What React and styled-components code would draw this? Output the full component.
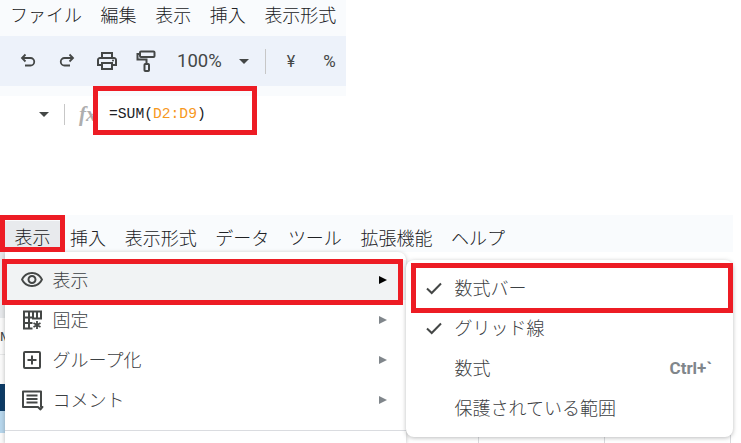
import React from "react";
import styled, { createGlobalStyle } from "styled-components";

const RED = "#ed1c24";
const JP = `"Noto Sans CJK JP", "Noto Sans", sans-serif`;

const GlobalStyle = createGlobalStyle`
  html, body {
    margin: 0;
    padding: 0;
    background: #fff;
    overflow: hidden;
  }
  body {
    font-family: ${JP};
  }
`;

const Page = styled.div`
  width: 741px;
  height: 443px;
  display: flex;
  flex-direction: column;
  overflow: hidden;
`;

// top crop
const TopCrop = styled.section`
  width: 346px;
  height: 215px;
  flex-shrink: 0;
`;
const MenuBar = styled.div`
  display: flex;
  gap: 18.6px;
  align-items: center;
  height: ${(p) => p.$height}px;
  padding: ${(p) => p.$padTop}px 0 ${(p) => p.$padBottom}px ${(p) => p.$left}px;
  background: #f9fbfd;
  overflow: hidden;
  box-sizing: border-box;
`;
const MenuLabel = styled.span`
  font-size: 18px;
  font-weight: 300;
  line-height: 1;
  color: #202124;
  white-space: nowrap;
`;
const Toolbar = styled.div`
  height: 50px;
  background: #edf2fa;
  display: flex;
  align-items: center;
  color: #444746;
  padding-left: 20px;
  box-sizing: border-box;
`;
const ToolIcon = styled.svg`
  display: block;
  flex-shrink: 0;
  margin-right: ${(p) => p.$gap}px;
`;
const Zoom = styled.span`
  font-family: Roboto, sans-serif;
  font-size: 18.5px;
  color: #444746;
  margin: 0 17px 0 0;
`;
const DownCaret = styled.i`
  display: block;
  width: 0;
  height: 0;
  border-left: 5px solid transparent;
  border-right: 5px solid transparent;
  border-top: 5px solid ${(p) => p.$color || "#444746"};
  flex-shrink: 0;
`;
const ToolDivider = styled.i`
  display: block;
  width: 1px;
  height: 25px;
  background: #c7c7c7;
  margin: 0 ${(p) => p.$right}px 0 ${(p) => p.$left}px;
`;
const ToolText = styled.span`
  font-family: Roboto, sans-serif;
  font-size: ${(p) => p.$size}px;
  color: #444746;
  margin-right: ${(p) => p.$right || 0}px;
`;
const FormulaStrip = styled.div`
  height: 10px;
  background: #f9fbfd;
`;
const FormulaRow = styled.div`
  height: 39px;
  display: flex;
  align-items: center;
  padding: 0 0 3px 39px;
  box-sizing: border-box;
  position: relative;
`;
const FormulaDivider = styled.i`
  display: block;
  width: 1px;
  height: 21px;
  background: #c7c7c7;
  margin: 0 14px 0 15px;
`;
const FxMark = styled.span`
  font-family: "Liberation Serif", serif;
  font-style: italic;
  font-weight: 700;
  font-size: 21px;
  line-height: 1;
  color: #aeaeae;
  width: 30px;
  flex-shrink: 0;
`;
const FormulaText = styled.span`
  font-family: "Liberation Mono", monospace;
  font-size: 14.67px;
  color: #202124;
`;
const Range = styled.span`
  color: #f7981d;
`;
const RedFrame = styled.span`
  position: absolute;
  left: ${(p) => p.$left}px;
  top: ${(p) => p.$top}px;
  width: ${(p) => p.$width}px;
  height: ${(p) => p.$height}px;
  border: 5px solid ${RED};
  box-sizing: border-box;
  pointer-events: none;
  z-index: 5;
`;

// bottom crop
const BottomCrop = styled.section`
  position: relative;
  flex: 1;
  width: 733px;
`;
const ActiveMenu = styled.span`
  background: #e8eaed;
  margin-left: -10px;
  margin-right: -9px;
  padding: 0 10px 2px;
  align-self: stretch;
  display: flex;
  align-items: center;
`;
const SheetEdge = styled.div`
  position: absolute;
  left: 0;
  top: 37px;
  width: 5px;
  height: 191px;
  background: linear-gradient(
    to bottom,
    #e6e8eb 0,
    #e6e8eb 66px,
    #fafafa 66px,
    #fafafa 102px,
    #d4d6d8 102px,
    #fafafa 103px,
    #fafafa 132px,
    #0b3a66 132px,
    #0b3a66 159px,
    #b6d6ec 159px,
    #b6d6ec 181px,
    #fafafa 181px
  );
`;
const EdgeLetter = styled.span`
  display: block;
  padding-top: 78px;
  font-family: Roboto, sans-serif;
  font-size: 13px;
  line-height: 1;
  color: #444746;
`;
const Dropdown = styled.div`
  position: absolute;
  left: ${(p) => p.$left}px;
  top: ${(p) => p.$top}px;
  width: ${(p) => p.$width}px;
  height: ${(p) => p.$height}px;
  background: #fff;
  border-radius: ${(p) => p.$radius};
  box-shadow: 0 1px 4px rgba(60, 64, 67, 0.35);
  box-sizing: border-box;
  padding-top: ${(p) => p.$padTop}px;
  z-index: ${(p) => p.$z};
`;
const Row = styled.div`
  height: 40px;
  display: flex;
  align-items: center;
  position: relative;
  padding: 0 ${(p) => p.$right}px 0 ${(p) => p.$left}px;
  background: ${(p) => (p.$hover ? "#f1f3f4" : "transparent")};
  box-sizing: border-box;
  font-size: 18px;
  font-weight: 300;
  color: #3c4043;
`;
const RowIcon = styled.svg`
  width: 24px;
  height: 24px;
  display: block;
  flex-shrink: 0;
  margin-right: 8.6px;
  color: #444746;
`;
const RowLabel = styled.span`
  flex: 1;
  white-space: nowrap;
  line-height: 1;
  padding-bottom: 2px;
`;
const SubArrow = styled.i`
  display: block;
  width: 0;
  height: 0;
  border-top: 4px solid transparent;
  border-bottom: 4px solid transparent;
  border-left: 8px solid ${(p) => (p.$active ? "#000" : "#80868b")};
`;
const Separator = styled.div`
  height: 1px;
  background: #dadce0;
  margin-top: 10px;
`;
const Check = styled.svg`
  width: 18px;
  height: 18px;
  display: block;
  flex-shrink: 0;
  margin-right: 11.6px;
  color: #444746;
`;
const Blank = styled.span`
  width: 18px;
  flex-shrink: 0;
  margin-right: 11.6px;
`;
const Shortcut = styled.span`
  font-family: Roboto, sans-serif;
  font-weight: 700;
  font-size: 17px;
  color: #80868b;
`;
const GridLines = styled.div`
  position: absolute;
  left: 370px;
  bottom: 0;
  width: 363px;
  height: 13px;
  border-top: 1px solid #e1e3e6;
  background: linear-gradient(#d8dadd, #d8dadd) 108px 0 / 1px 100% no-repeat,
    linear-gradient(#d8dadd, #d8dadd) 234px 0 / 1px 100% no-repeat,
    linear-gradient(#d8dadd, #d8dadd) 360px 0 / 1px 100% no-repeat;
`;

const stroke = { fill: "none", stroke: "currentColor", strokeWidth: 2 };

const UndoIcon = () => (
  <ToolIcon $gap={23} width="16" height="16" viewBox="0 0 16 16" {...stroke} strokeWidth="1.8">
    <path d="M5.500 1.500 2 5l3.500 3.500M2 5h8.500a3.700 3.700 0 0 1 0 7.500H5" />
  </ToolIcon>
);
const RedoIcon = () => (
  <ToolIcon $gap={20} width="16" height="16" viewBox="0 0 16 16" {...stroke} strokeWidth="1.8">
    <path d="M10.500 1.500 14 5l-3.500 3.500M14 5H5.500a3.700 3.700 0 0 0 0 7.500H11" />
  </ToolIcon>
);
const PrintIcon = () => (
  <ToolIcon $gap={17} width="24" height="24" viewBox="0 0 24 24" fill="currentColor">
    <path d="M19 8h-1V3H6v5H5c-1.660 0-3 1.340-3 3v6h4v4h12v-4h4v-6c0-1.660-1.340-3-3-3zM8 5h8v3H8V5zm8 12v2H8v-4h8v2zm2-2v-2H6v2H4v-4c0-.550.450-1 1-1h14c.550 0 1 .450 1 1v4h-2z" />
    <circle cx="18" cy="11.500" r="1" />
  </ToolIcon>
);
const PaintIcon = () => (
  <ToolIcon $gap={21} width="20" height="22" viewBox="0 0 20 22" {...stroke}>
    <rect x="4" y="1.500" width="14.500" height="5.500" rx="1" />
    <path d="M4 4H1.500v5.500h9V14" />
    <rect x="8.500" y="14" width="4.500" height="7" rx=".8" />
  </ToolIcon>
);
const EyeIcon = () => (
  <RowIcon viewBox="0 0 24 24" fill="currentColor">
    <path d="M12 6c3.790 0 7.170 2.130 8.820 5.500C19.170 14.870 15.790 17 12 17s-7.170-2.130-8.820-5.500C4.830 8.130 8.210 6 12 6m0-2C7 4 2.730 7.110 1 11.500 2.730 15.890 7 19 12 19s9.270-3.110 11-7.500C21.270 7.110 17 4 12 4zm0 5c1.380 0 2.500 1.120 2.500 2.500S13.380 14 12 14s-2.500-1.120-2.500-2.500S10.620 9 12 9m0-2c-2.480 0-4.500 2.020-4.500 4.500S9.520 16 12 16s4.500-2.020 4.500-4.500S14.480 7 12 7z" />
  </RowIcon>
);
const FreezeIcon = () => (
  <RowIcon viewBox="0 0 24 24" fill="none" stroke="currentColor" strokeWidth="2">
    <path d="M12.500 3.500H4v17h8.500M3.500 9.500h9M3.500 15h9M9 3.500v17M13 3.500h8v7h-8zM17 3.500v7" />
    <path d="M17 13v8M13.500 15l7 4M20.500 15l-7 4" strokeWidth="1.800" />
  </RowIcon>
);
const GroupIcon = () => (
  <RowIcon viewBox="0 0 24 24" fill="none" stroke="currentColor" strokeWidth="2">
    <rect x="4" y="4" width="16" height="16" rx="1" />
    <path d="M12 7.500v9M7.500 12h9" />
  </RowIcon>
);
const CommentIcon = () => (
  <RowIcon viewBox="0 0 24 24" fill="none" stroke="currentColor" strokeWidth="2">
    <path d="M3 3.500h18v15.500h1.500L20.500 21.500 18 19H3z" strokeLinejoin="round" />
    <path d="M6.500 7.500h11M6.500 11h11M6.500 14.500h11" />
  </RowIcon>
);
const CheckIcon = () => (
  <Check viewBox="0 0 18 18" fill="none" stroke="currentColor" strokeWidth="2">
    <path d="M2 9.500 6.700 14 16 4.500" />
  </Check>
);

export default function App() {
  return (
    <Page>
      <GlobalStyle />
      <TopCrop>
        <MenuBar $height={36} $left={10} $padTop={0} $padBottom={9}>
          {["ファイル", "編集", "表示", "挿入", "表示形式"].map((m) => (
            <MenuLabel key={m}>{m}</MenuLabel>
          ))}
        </MenuBar>
        <Toolbar>
          <UndoIcon />
          <RedoIcon />
          <PrintIcon />
          <PaintIcon />
          <Zoom>100%</Zoom>
          <DownCaret />
          <ToolDivider $left={16} $right={21} />
          <ToolText $size={16} $right={28}>¥</ToolText>
          <ToolText $size={17}>%</ToolText>
        </Toolbar>
        <FormulaStrip />
        <FormulaRow>
          <DownCaret />
          <FormulaDivider />
          <FxMark>fx</FxMark>
          <FormulaText>
            =SUM(<Range>D2:D9</Range>)
          </FormulaText>
          <RedFrame $left={93} $top={-10} $width={164} $height={49} />
        </FormulaRow>
      </TopCrop>
      <BottomCrop>
        <MenuBar $height={37} $left={14.5} $padTop={6} $padBottom={0}>
          <ActiveMenu>
            <MenuLabel>表示</MenuLabel>
          </ActiveMenu>
          {["挿入", "表示形式", "データ", "ツール", "拡張機能", "ヘルプ"].map((m) => (
            <MenuLabel key={m}>{m}</MenuLabel>
          ))}
        </MenuBar>
        <RedFrame $left={0} $top={0} $width={65} $height={37} />
        <SheetEdge>
          <EdgeLetter>M</EdgeLetter>
        </SheetEdge>
        <GridLines />
        <Dropdown $left={5} $top={37} $width={401} $height={191} $padTop={8} $radius="0 8px 0 0" $z={1}>
          <Row $hover $left={15} $right={19}>
            <EyeIcon />
            <RowLabel>表示</RowLabel>
            <SubArrow $active />
          </Row>
          <Row $left={15} $right={19}>
            <FreezeIcon />
            <RowLabel>固定</RowLabel>
            <SubArrow />
          </Row>
          <Row $left={15} $right={19}>
            <GroupIcon />
            <RowLabel>グループ化</RowLabel>
            <SubArrow />
          </Row>
          <Row $left={15} $right={19}>
            <CommentIcon />
            <RowLabel>コメント</RowLabel>
            <SubArrow />
          </Row>
          <Separator />
        </Dropdown>
        <RedFrame $left={2} $top={44} $width={401} $height={46} />
        <Dropdown $left={406} $top={45} $width={327} $height={177} $padTop={8} $radius="8px" $z={2}>
          <Row $left={19} $right={21}>
            <CheckIcon />
            <RowLabel>数式バー</RowLabel>
          </Row>
          <Row $left={19} $right={21}>
            <CheckIcon />
            <RowLabel>グリッド線</RowLabel>
          </Row>
          <Row $left={19} $right={21}>
            <Blank />
            <RowLabel>数式</RowLabel>
            <Shortcut>Ctrl+`</Shortcut>
          </Row>
          <Row $left={19} $right={21}>
            <Blank />
            <RowLabel>保護されている範囲</RowLabel>
          </Row>
        </Dropdown>
        <RedFrame $left={411} $top={48} $width={322} $height={50} />
      </BottomCrop>
    </Page>
  );
}
